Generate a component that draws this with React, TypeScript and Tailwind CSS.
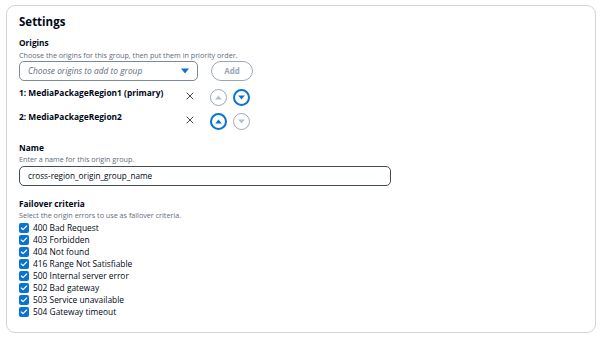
import { Check, X } from "lucide-react"

const criteria = [
  "400 Bad Request",
  "403 Forbidden",
  "404 Not found",
  "416 Range Not Satisfiable",
  "500 Internal server error",
  "502 Bad gateway",
  "503 Service unavailable",
  "504 Gateway timeout",
]

function Caret({ up, className }: { up?: boolean; className?: string }) {
  return (
    <svg width="8" height="6" viewBox="0 0 8 6" className={className}>
      {up ? <path d="M0 5.5 L4 0.5 L8 5.5 Z" fill="currentColor" /> : <path d="M0 0.5 L8 0.5 L4 5.5 Z" fill="currentColor" />}
    </svg>
  )
}

function MoveButton({ up, active }: { up?: boolean; active?: boolean }) {
  return (
    <div
      className={
        active
          ? "w-[17px] h-[17px] rounded-full border-2 border-[#0972d3] text-[#0972d3] flex items-center justify-center"
          : "w-[17px] h-[17px] rounded-full border border-[#9ba7b6] text-[#b6bec9] flex items-center justify-center"
      }
    >
      <Caret up={up} className="w-[7px] h-[5px]" />
    </div>
  )
}

function OriginRow({ label, upActive, downActive }: { label: string; upActive?: boolean; downActive?: boolean }) {
  return (
    <div className="flex items-start h-[24px]">
      <div className="w-[165px] whitespace-nowrap text-[8.4px] font-bold leading-[12px] text-[#000716]">{label}</div>
      <X className="w-[12px] h-[12px] text-[#16191f] mt-[3px]" strokeWidth={1.6} />
      <div className="flex gap-[6px] ml-[14px] mt-[2px]">
        <MoveButton up active={upActive} />
        <MoveButton active={downActive} />
      </div>
    </div>
  )
}

export default function App() {
  return (
    <div className="w-[602px] h-[340px] bg-white pt-[5px] pl-[6px] font-['Open_Sans',sans-serif] text-[#000716]">
      <div className="w-[590px] h-[328px] rounded-[9px] border border-[#d1d5db] pl-[12px] pt-[8px]">
        <div className="text-[11.5px] font-bold leading-[16px]">Settings</div>

        <div className="mt-[7px] text-[8.3px] font-bold leading-[12px]">Origins</div>
        <div className="text-[7.2px] text-[#5f6b7a] leading-[12px]">
          Choose the origins for this group, then put them in priority order.
        </div>

        <div className="flex items-center h-[20px]">
          <div className="w-[179px] h-[20px] rounded-[5px] border border-[#7d8998] flex items-center justify-between pl-[8px] pr-[8px]">
            <span className="text-[8.4px] italic text-[#5f6b7a]">Choose origins to add to group</span>
            <Caret className="w-[8px] h-[6px] text-[#0972d3]" />
          </div>
          <div className="ml-[13px] w-[42px] h-[20px] rounded-full border border-[#9ba7b6] flex items-center justify-center text-[8px] font-bold text-[#9ba7b6]">
            Add
          </div>
        </div>

        <div className="mt-[6px]">
          <OriginRow label="1: MediaPackageRegion1 (primary)" downActive />
          <OriginRow label="2: MediaPackageRegion2" upActive />
        </div>

        <div className="mt-[7px] text-[8.3px] font-bold leading-[12px]">Name</div>
        <div className="text-[7.2px] text-[#5f6b7a] leading-[10px]">Enter a name for this origin group.</div>
        <div className="mt-[2px] w-[372px] h-[20px] rounded-[5px] border border-[#414d5c] flex items-center pl-[8px] text-[8.2px]">
          cross-region_origin_group_name
        </div>

        <div className="mt-[12px] text-[8.3px] font-bold leading-[12px]">Failover criteria</div>
        <div className="text-[7.2px] text-[#5f6b7a] leading-[10px]">Select the origin errors to use as failover criteria.</div>
        <div className="mt-[2px] flex flex-col">
          {criteria.map((c) => (
            <div key={c} className="flex items-center h-[12px]">
              <div className="w-[10px] h-[10px] rounded-[2px] bg-[#0972d3] flex items-center justify-center">
                <Check className="w-[8px] h-[8px] text-white" strokeWidth={3.5} />
              </div>
              <span className="ml-[4px] text-[8.4px] leading-[12px]">{c}</span>
            </div>
          ))}
        </div>
      </div>
    </div>
  )
}
